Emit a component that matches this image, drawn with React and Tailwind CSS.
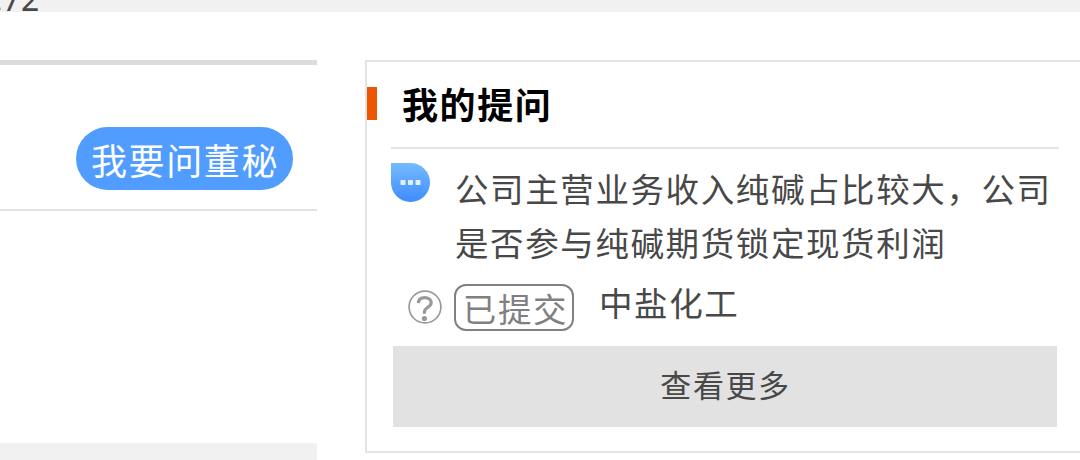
function ChatIcon() {
  return (
    <svg className="h-[39px] w-[39px] shrink-0" viewBox="0 0 39 39">
      <defs>
        <linearGradient id="bubble" x1="0" y1="0" x2="0" y2="1">
          <stop offset="0" stopColor="#75bbff" />
          <stop offset="1" stopColor="#3e8cff" />
        </linearGradient>
      </defs>
      <path d="M0 0H19.5A19.5 19.5 0 1 1 0 19.5Z" fill="url(#bubble)" />
      <g fill="#e3f0ff">
        <rect x="9.5" y="17" width="5" height="5" rx="0.8" />
        <rect x="17" y="17" width="5" height="5" rx="0.8" />
        <rect x="24.5" y="17" width="5" height="5" rx="0.8" />
      </g>
    </svg>
  );
}

function QuestionIcon() {
  return (
    <svg className="mt-[6px] h-[34px] w-[34px] shrink-0" viewBox="0 0 34 34" fill="none">
      <circle cx="17" cy="17" r="15.9" stroke="#999" strokeWidth="1.7" />
      <path d="M10.3 13.2C10.5 9.6 13.2 7.7 16.7 7.7C20.4 7.7 23.2 9.7 23.2 12.8C23.2 17.2 16.4 17.4 16.4 22V23.8" stroke="#999" strokeWidth="3.2" />
      <circle cx="16.4" cy="28.6" r="2.6" fill="#999" />
    </svg>
  );
}

export default function App() {
  return (
    <div className="flex h-[460px] w-[1080px] flex-col overflow-hidden bg-white font-['Noto_Sans_CJK_SC',sans-serif] text-[#484848]">
      <div className="flex h-3 shrink-0 items-end overflow-hidden bg-[#f1f1f1]">
        <span className="-mb-[4px] -ml-[6px] font-['Noto_Sans',sans-serif] text-[32px] leading-[34px]">.72</span>
      </div>
      <div className="flex min-h-0 flex-1">
        <div className="flex w-[317px] shrink-0 flex-col pt-12">
          <div className="h-[151px] shrink-0 border-t-[5px] border-b-2 border-t-[#dcdcdc] border-b-[#e3e3e3] pt-[62px]">
            <button className="ml-[76px] flex h-[63px] w-[217px] items-center justify-center rounded-full bg-[#509dff] pt-px pl-[1px] text-[36px] leading-none tracking-[1.6px] whitespace-nowrap text-white">
              我要问董秘
            </button>
          </div>
          <div className="mt-auto h-[17px] bg-[#f1f1f1]" />
        </div>
        <section className="mt-12 ml-12 h-[393px] w-[720px] shrink-0 border-2 border-[#e4e4e4]">
          <header className="flex h-[85px] items-start pt-[25px]">
            <div className="h-[33px] w-[10px] bg-[#ee5500]" />
            <h2 className="-mt-[2px] ml-[25px] text-[36px] leading-[36px] font-bold tracking-[1.6px] text-black">我的提问</h2>
          </header>
          <div className="ml-6 w-[668px] border-t-2 border-[#e4e4e4] pt-[14px]">
            <div className="flex h-[121px]">
              <ChatIcon />
              <p className="-mt-[2px] ml-[25px] text-[33.5px] leading-[54px] tracking-[1.6px] whitespace-nowrap">
                公司主营业务收入纯碱占比较大，公司
                <br />
                是否参与纯碱期货锁定现货利润
              </p>
            </div>
            <div className="flex h-[62px] pl-[17px]">
              <QuestionIcon />
              <span className="ml-[12px] flex h-[47px] w-[120px] items-center justify-center rounded-[12px] border-2 border-[#808080] pt-px pl-[3px] text-[33.5px] leading-none tracking-[1.6px] whitespace-nowrap text-[#808080]">
                已提交
              </span>
              <span className="-mt-[2px] ml-[25px] text-[33.5px] leading-[40px] tracking-[1.6px]">中盐化工</span>
            </div>
            <button className="ml-[2px] flex h-[81px] w-[664px] items-center justify-center bg-[#e2e2e2] pb-[6px] pl-px text-[31px] leading-none tracking-[1.6px]">
              查看更多
            </button>
          </div>
        </section>
      </div>
    </div>
  );
}
